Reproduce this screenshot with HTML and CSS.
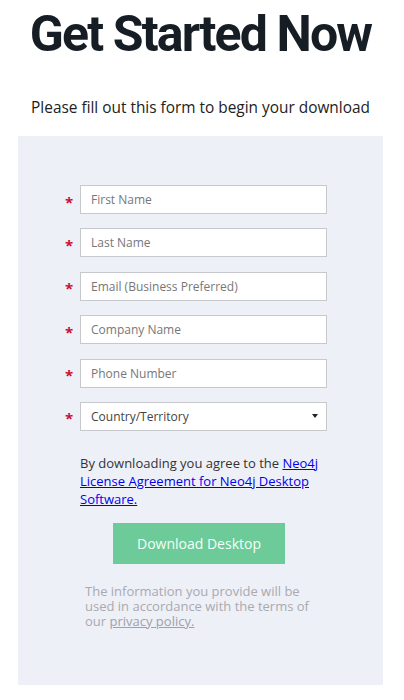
FILE: index.html
```html
<!DOCTYPE html>
<html lang="en">
<head>
<meta charset="utf-8">
<title>Get Started Now</title>
<link rel="stylesheet" href="styles.css">
</head>
<body>
<div class="page">
  <h1 class="title">Get Started Now</h1>
  <p class="subtitle">Please fill out this form to begin your download</p>
  <div class="panel">
    <form class="form">
      <div class="row"><span class="req">*</span><input class="field" type="text" placeholder="First Name"></div>
      <div class="row"><span class="req">*</span><input class="field" type="text" placeholder="Last Name"></div>
      <div class="row"><span class="req">*</span><input class="field" type="text" placeholder="Email (Business Preferred)"></div>
      <div class="row"><span class="req">*</span><input class="field" type="text" placeholder="Company Name"></div>
      <div class="row"><span class="req">*</span><input class="field" type="text" placeholder="Phone Number"></div>
      <div class="row"><span class="req">*</span>
        <div class="field select"><span class="select-text">Country/Territory</span><span class="caret"></span></div>
      </div>
      <p class="agree">By downloading you agree to the <a href="#">Neo4j License Agreement for Neo4j Desktop Software.</a></p>
      <div class="btn-wrap"><button type="button" class="btn">Download Desktop</button></div>
      <p class="privacy">The information you provide will be used in accordance with the terms of our <a href="#">privacy policy.</a></p>
    </form>
  </div>
</div>
</body>
</html>
```
FILE: styles.css
```css
* { box-sizing: border-box; }
html, body { margin: 0; padding: 0; background: #fff; }
.page { padding: 0 21px 0 18px; }
.title {
  margin: 0;
  padding-top: 4px;
  font-family: Roboto, "Liberation Sans", sans-serif;
  font-weight: 700;
  font-size: 50px;
  line-height: 60px;
  letter-spacing: -1.85px;
  white-space: nowrap;
  color: #171d25;
  text-align: center;
}
.subtitle {
  margin: 34px 0 0;
  font-family: "Open Sans", sans-serif;
  font-size: 15.4px;
  line-height: 20px;
  color: #222;
  text-align: center;
  white-space: nowrap;
}
.panel {
  margin-top: 18px;
  width: 365px;
  height: 549px;
  background: #eef0f8;
  padding-top: 49px;
}
.form { padding-left: 47px; width: 309px; }
.row {
  display: flex;
  align-items: center;
  margin-bottom: 14.4px;
}
.req {
  width: 15px;
  color: #c8102e;
  font-family: "Open Sans", sans-serif;
  font-size: 15px;
  font-weight: 700;
  line-height: 15px;
  height: 10px;
}
.field {
  width: 247px;
  height: 29px;
  border: 1px solid #c6c8cc;
  background: #fff;
  padding: 0 10px;
  font-family: "Open Sans", sans-serif;
  font-size: 12px;
  color: #333;
  outline: none;
}
.field::placeholder { color: #777; }
.select {
  display: flex;
  align-items: center;
  justify-content: space-between;
  color: #444;
  padding-right: 8px;
}
.caret {
  width: 0; height: 0;
  border-left: 3px solid transparent;
  border-right: 3px solid transparent;
  border-top: 4px solid #222;
}
.agree {
  margin: 23px 0 0 15px;
  font-family: "Open Sans", sans-serif;
  font-size: 13px;
  line-height: 18px;
  color: #333;
}
.agree a { color: #0000ee; }
.btn-wrap { margin: 15px 0 0 48px; }
.btn {
  width: 172px;
  height: 41px;
  border: 0;
  background: #6ccb99;
  color: #f4fff8;
  font-family: "Open Sans", sans-serif;
  font-size: 14px;
  cursor: pointer;
}
.privacy {
  margin: 20px 0 0 20px;
  width: 240px;
  font-family: "Open Sans", sans-serif;
  font-size: 13px;
  line-height: 15px;
  color: #a9a9ae;
}
.privacy a { color: #a0a0a6; }
```
